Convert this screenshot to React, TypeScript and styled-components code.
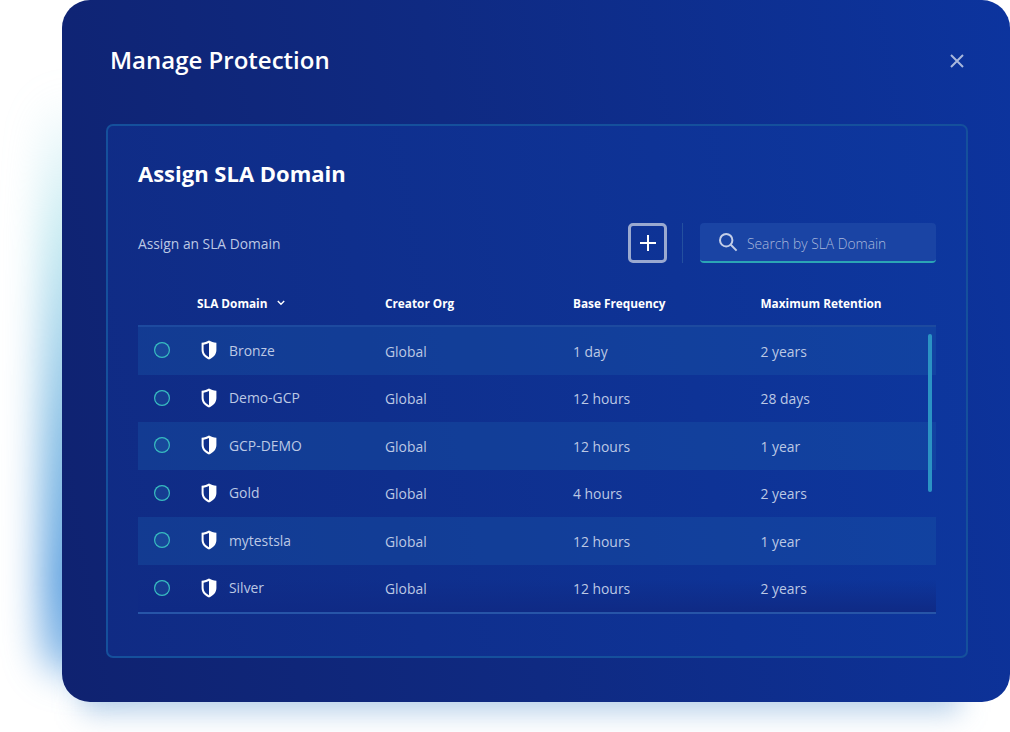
import React from "react";
import styled, { createGlobalStyle } from "styled-components";

const rows = [
  { name: "Bronze", org: "Global", frequency: "1 day", retention: "2 years" },
  { name: "Demo-GCP", org: "Global", frequency: "12 hours", retention: "28 days" },
  { name: "GCP-DEMO", org: "Global", frequency: "12 hours", retention: "1 year" },
  { name: "Gold", org: "Global", frequency: "4 hours", retention: "2 years" },
  { name: "mytestsla", org: "Global", frequency: "12 hours", retention: "1 year" },
  { name: "Silver", org: "Global", frequency: "12 hours", retention: "2 years" },
];

const ShieldIcon = () => (
  <svg width="16" height="20" viewBox="0 0 16 20">
    <path
      d="M8 0.6 C10 1.8 12.6 2.6 15.4 2.8 V10 C15.4 14.4 12.4 17.6 8 19.4 C3.6 17.6 0.6 14.4 0.6 10 V2.8 C3.4 2.6 6 1.8 8 0.6 Z"
      fill="#ffffff"
    />
    <path
      d="M8 3 C6.4 3.9 4.5 4.5 2.6 4.7 V10 C2.6 13.2 4.6 15.6 8 17.2 Z"
      fill="#10308a"
    />
  </svg>
);

export default function App() {
  return (
    <>
      <GlobalStyle />
      <Stage>
        <Modal>
          <ModalHeader>
            <ModalTitle>Manage Protection</ModalTitle>
            <CloseButton>
              <svg width="14" height="14" viewBox="0 0 14 14">
                <path d="M1 1 L13 13 M13 1 L1 13" stroke="#a9b8dc" strokeWidth="2" fill="none" />
              </svg>
            </CloseButton>
          </ModalHeader>
          <Panel>
            <PanelTitle>Assign SLA Domain</PanelTitle>
            <Toolbar>
              <ToolbarLabel>Assign an SLA Domain</ToolbarLabel>
              <AddButton>
                <svg width="18" height="18" viewBox="0 0 18 18">
                  <path d="M9 1 V17 M1 9 H17" stroke="#ffffff" strokeWidth="2" fill="none" />
                </svg>
              </AddButton>
              <Divider />
              <SearchBox>
                <svg width="20" height="20" viewBox="0 0 20 20">
                  <circle cx="8.2" cy="8.2" r="6.2" stroke="#c3cee8" strokeWidth="2" fill="none" />
                  <path d="M12.8 12.8 L18.6 18.6" stroke="#c3cee8" strokeWidth="2" fill="none" />
                </svg>
                <SearchText>Search by SLA Domain</SearchText>
              </SearchBox>
            </Toolbar>
            <Table>
              <HeaderRow>
                <span />
                <HeaderCell>
                  SLA Domain
                  <svg width="8" height="6" viewBox="0 0 8 6">
                    <path d="M0.8 1 L4 4.2 L7.2 1" stroke="#ffffff" strokeWidth="1.4" fill="none" />
                  </svg>
                </HeaderCell>
                <HeaderCell>Creator Org</HeaderCell>
                <HeaderCell>Base Frequency</HeaderCell>
                <HeaderCell>Maximum Retention</HeaderCell>
              </HeaderRow>
              <Body>
                {rows.map((row, i) => (
                  <Row key={row.name} $striped={i % 2 === 0} $last={i === rows.length - 1}>
                    <Radio />
                    <NameCell>
                      <ShieldIcon />
                      <span>{row.name}</span>
                    </NameCell>
                    <Cell>{row.org}</Cell>
                    <Cell>{row.frequency}</Cell>
                    <Cell>{row.retention}</Cell>
                  </Row>
                ))}
                <ScrollThumb />
              </Body>
            </Table>
          </Panel>
        </Modal>
      </Stage>
    </>
  );
}

const GlobalStyle = createGlobalStyle`
  html, body {
    margin: 0;
    background: #ffffff;
    font-family: "Open Sans", "Noto Sans", sans-serif;
  }
`;

const Stage = styled.div`
  width: 1010px;
  height: 732px;
  padding-left: 62px;
  box-sizing: border-box;
  overflow: hidden;
  position: relative;
  isolation: isolate;
  background: #ffffff;
`;

const Modal = styled.section`
  width: 948px;
  height: 702px;
  box-sizing: border-box;
  padding: 0 42px 44px 44px;
  display: flex;
  flex-direction: column;
  position: relative;
  border-radius: 28px;
  background: linear-gradient(80deg, #0f2270 0%, #0f2a82 45%, #0c349e 100%);

  /* glow down the left edge, teal at the top going to blue */
  &::before {
    content: "";
    position: absolute;
    z-index: -1;
    left: -22px;
    top: 90px;
    width: 100px;
    height: 585px;
    border-radius: 30px;
    filter: blur(18px);
    background: linear-gradient(
      180deg,
      rgba(130, 215, 225, 0) 0%,
      rgba(130, 210, 225, 0.45) 25%,
      rgba(70, 155, 215, 0.65) 60%,
      rgba(50, 135, 215, 0.75) 85%,
      rgba(50, 135, 215, 0.5) 100%
    );
  }

  /* soft shadow under the bottom edge */
  &::after {
    content: "";
    position: absolute;
    z-index: -1;
    left: 20px;
    right: 50px;
    bottom: -10px;
    height: 40px;
    filter: blur(14px);
    background: rgba(70, 135, 200, 0.4);
  }
`;

const ModalHeader = styled.header`
  height: 124px;
  flex-shrink: 0;
  display: flex;
  align-items: flex-start;
  justify-content: space-between;
  padding: 42px 4px 0 4px;
  box-sizing: border-box;
`;

const ModalTitle = styled.h1`
  margin: 0;
  font-size: 24px;
  line-height: 36px;
  font-weight: 600;
  color: #ffffff;
`;

const CloseButton = styled.div`
  display: flex;
  margin-top: 12px;
`;

const Panel = styled.div`
  flex: 1;
  box-sizing: border-box;
  padding: 31px 30px 0 30px;
  border: 2px solid #15509c;
  border-radius: 7px;
  background: linear-gradient(80deg, #102b84 0%, #0d379f 100%);
`;

const PanelTitle = styled.h2`
  margin: 0;
  font-size: 22px;
  line-height: 32px;
  font-weight: 700;
  color: #ffffff;
`;

const Toolbar = styled.div`
  display: flex;
  align-items: center;
  height: 40px;
  margin-top: 34px;
`;

const ToolbarLabel = styled.span`
  flex: 1;
  font-size: 13.8px;
  color: #bcc8e4;
`;

const AddButton = styled.div`
  width: 39px;
  height: 40px;
  box-sizing: border-box;
  border: 3px solid #9aa9d0;
  border-radius: 5px;
  display: flex;
  align-items: center;
  justify-content: center;
`;

const Divider = styled.div`
  width: 1px;
  height: 40px;
  margin: 0 17px 0 15px;
  background: #24509f;
`;

const SearchBox = styled.div`
  width: 236px;
  height: 40px;
  box-sizing: border-box;
  padding: 0 0 0 18px;
  display: flex;
  align-items: center;
  gap: 9px;
  border-radius: 4px;
  border-bottom: 2px solid #2ba5b5;
  background: #1a44a4;
`;

const SearchText = styled.span`
  font-size: 13.8px;
  font-weight: 300;
  color: #a9b8dc;
  padding-top: 2px;
`;

const Table = styled.div`
  margin-top: 20px;
`;

const columns = "59px 188px 188px 187.5px 1fr";

const HeaderRow = styled.div`
  display: grid;
  grid-template-columns: ${columns};
  align-items: center;
  height: 40px;
  padding-bottom: 2px;
  border-bottom: 2px solid #1d4a9f;
`;

const HeaderCell = styled.div`
  display: flex;
  align-items: center;
  gap: 10px;
  font-size: 11.8px;
  font-weight: 700;
  color: #ffffff;
`;

const Body = styled.div`
  position: relative;
  border-bottom: 2px solid #2755a8;
`;

const Row = styled.div<{ $striped: boolean; $last: boolean }>`
  display: grid;
  grid-template-columns: ${columns};
  align-items: center;
  height: 47.5px;
  background: ${(p) =>
    p.$striped
      ? "rgba(25, 90, 170, 0.35)"
      : p.$last
        ? "linear-gradient(180deg, transparent 30%, #0f2a85 100%)"
        : "transparent"};
`;

const Radio = styled.div`
  width: 16px;
  height: 16px;
  margin-left: 15.5px;
  margin-top: -1px;
  box-shadow: inset 0 0 0 1.2px #38bcc0;
  border-radius: 50%;
  background: rgba(40, 110, 180, 0.25);
`;

const NameCell = styled.div`
  display: flex;
  align-items: center;
  gap: 12px;
  padding-left: 4px;
  margin-top: -1px;
  font-size: 13.9px;
  color: #bcc8e4;
`;

const Cell = styled.div`
  font-size: 13.9px;
  color: #bcc8e4;
  padding-top: 1px;
`;

const ScrollThumb = styled.div`
  position: absolute;
  right: 4px;
  top: 7px;
  width: 4px;
  height: 158px;
  border-radius: 2px;
  background: #2b93c4;
`;
